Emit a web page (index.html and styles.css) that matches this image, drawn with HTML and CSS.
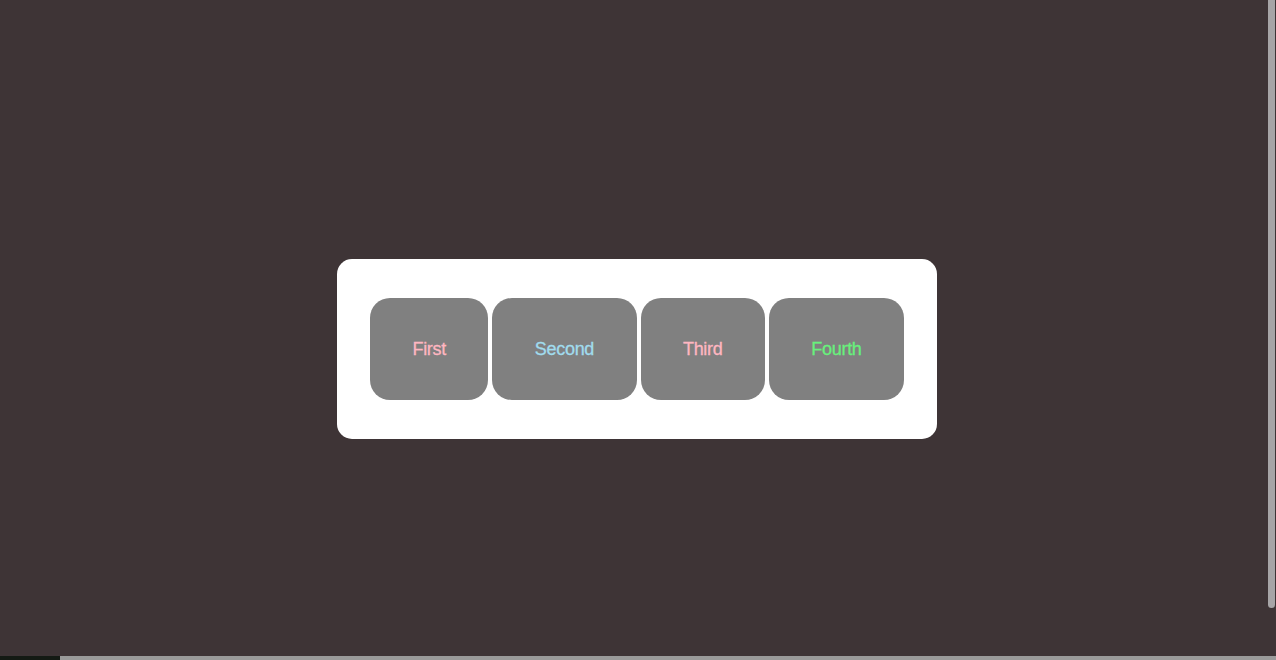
FILE: index.html
```html
<!DOCTYPE html>
<html lang="en">
<head>
<meta charset="utf-8">
<title>Tabs</title>
<link rel="stylesheet" href="styles.css">
</head>
<body>
<main class="stage">
  <div class="panel">
    <div class="item pink">First</div>
    <div class="item blue">Second</div>
    <div class="item pink">Third</div>
    <div class="item green">Fourth</div>
  </div>
</main>
<div class="scroll-thumb"></div>
<div class="dock"><span class="dock-dark"></span><span class="dock-gray"></span></div>
</body>
</html>
```
FILE: styles.css
```css
html, body {
  margin: 0;
  padding: 0;
  height: 100%;
  overflow: hidden;
}
body {
  background: #3e3436;
  font-family: "Liberation Sans", Arial, Helvetica, sans-serif;
}
.stage {
  display: flex;
  justify-content: center;
  padding: 259px 2px 0 0;
}
.panel {
  width: 600px;
  box-sizing: border-box;
  background: #ffffff;
  border-radius: 15px;
  padding: 39px 33px;
  display: flex;
  gap: 4px;
}
.item {
  flex: 1 1 auto;
  height: 102px;
  padding: 0 40px;
  background: #808080;
  border-radius: 20px;
  display: flex;
  align-items: center;
  justify-content: center;
  font-size: 18px;
  letter-spacing: -0.3px;
  white-space: nowrap;
  -webkit-text-stroke: 0.3px currentColor;
}
.pink { color: #ffb6c1; }
.blue { color: #a0dcee; }
.green { color: #68f07c; }
.scroll-thumb {
  position: fixed;
  top: 0;
  right: 1px;
  width: 7px;
  height: 608px;
  background: #a7a5a7;
  border-radius: 0 0 4px 4px;
}
.dock {
  position: fixed;
  left: 0;
  right: 0;
  bottom: 0;
  height: 4px;
  display: flex;
}
.dock-dark { width: 60px; background: #141a14; }
.dock-gray { flex: 1; background: #9a9a9a; }
```
